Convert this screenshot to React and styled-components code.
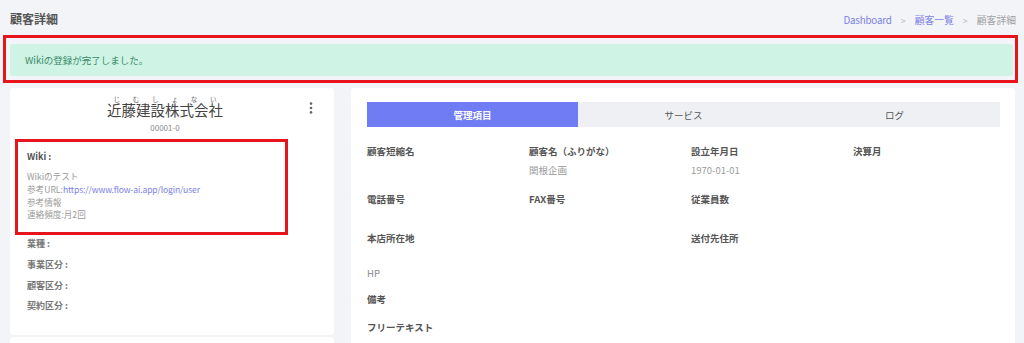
import React from "react";
import styled, { createGlobalStyle } from "styled-components";

const Global = createGlobalStyle`
  html, body { margin: 0; padding: 0; overflow: hidden; background: #f3f4f8; }
  body { font-family: "Noto Sans CJK JP", "Noto Sans", sans-serif; color: #555; }
  * { box-sizing: border-box; }
`;

const Page = styled.div`
  width: 1024px;
  height: 343px;
  overflow: hidden;
`;

const Header = styled.header`
  display: flex;
  align-items: center;
  justify-content: space-between;
  height: 36px;
  padding: 0 8px 0 10px;
`;

const Title = styled.h1`
  margin: 0;
  font-size: 12px;
  font-weight: 700;
  color: #555;
`;

const Crumbs = styled.nav`
  display: flex;
  align-items: center;
  gap: 9px;
  font-size: 9.8px;
  margin-top: 4px;
`;

const Crumb = styled.span`
  color: ${(p) => (p.$current ? "#a0a0a0" : "#7b80e6")};
  letter-spacing: ${(p) => (p.$latin ? "-0.2px" : "0")};
`;

const Sep = styled.span`
  color: #b8b8b8;
  font-size: 9px;
`;

const Highlight = styled.div`
  border: 3px solid #e8141b;
  margin: -1px 6px 0 3px;
  padding: 6px 2px 4px 4px;
`;

const Alert = styled.div`
  display: flex;
  align-items: center;
  height: 32px;
  padding: 0 15px;
  background: #cff3e5;
  border-radius: 3px;
  color: #388b68;
  font-size: 9.5px;
`;

const Main = styled.div`
  display: flex;
  gap: 17px;
  padding: 5px 9px 0 10px;
`;

const LeftCol = styled.div`
  width: 324px;
  flex: none;
  display: flex;
  flex-direction: column;
  gap: 2px;
`;

const Card = styled.section`
  background: #fff;
  border-radius: 3px;
`;

const ProfileCard = styled(Card)`
  height: 247px;
  padding: 8px 15px 0 17px;
`;

const StubCard = styled(Card)`
  height: 40px;
`;

const NameRow = styled.div`
  display: flex;
  align-items: flex-start;
`;

const NameBlock = styled.div`
  flex: 1;
  text-align: center;
`;

const CompanyName = styled.ruby`
  font-size: 14.5px;
  color: #444;
  line-height: 1.2;
  rt {
    font-size: 6.5px;
    color: #666;
  }
`;

const Code = styled.div`
  font-size: 8px;
  color: #8a8a8a;
  margin-top: 1px;
`;

const Kebab = styled.button`
  flex: none;
  width: 16px;
  height: 16px;
  margin-top: 4px;
  padding: 0;
  border: 0;
  background: none;
  display: flex;
  align-items: center;
  justify-content: center;
  color: #666;
`;

const WikiBox = styled.div`
  border: 3px solid #e8141b;
  margin: 6px 0 0 -12px;
  width: 273px;
  height: 96px;
  padding: 8px 9px 0 9px;
`;

const WikiTitle = styled.div`
  font-size: 9px;
  font-weight: 700;
  color: #555;
  line-height: 14px;
  margin-bottom: 6px;
`;

const WikiLine = styled.div`
  font-size: 8.6px;
  line-height: 12.8px;
  color: #9a9a9a;
`;

const Link = styled.a`
  color: #7b80e6;
  text-decoration: none;
  letter-spacing: -0.15px;
`;

const InfoList = styled.div`
  display: flex;
  flex-direction: column;
  gap: 6.8px;
  margin-top: 2px;
`;

const InfoLabel = styled.div`
  font-size: 9px;
  font-weight: 600;
  color: #777;
  line-height: 14px;
`;

const DetailCard = styled(Card)`
  flex: 1;
  height: 270px;
  padding: 14px 15px 0 16px;
`;

const Tabs = styled.div`
  display: grid;
  grid-template-columns: repeat(3, 1fr);
  height: 25px;
  background: #eef0f4;
`;

const Tab = styled.div`
  display: flex;
  align-items: center;
  justify-content: center;
  font-size: 9.5px;
  font-weight: ${(p) => (p.$active ? 700 : 400)};
  color: ${(p) => (p.$active ? "#fff" : "#555")};
  background: ${(p) => (p.$active ? "#6f7cf3" : "transparent")};
`;

const FieldGrid = styled.div`
  margin-top: 16px;
  display: grid;
  grid-template-columns: 162px 162px 162px 1fr;
  grid-template-rows: 48px 39px 35px 26px 28px 20px;
`;

const Field = styled.div`
  grid-column: span ${(p) => p.$span || 1};
`;

const Label = styled.div`
  font-size: 9.5px;
  font-weight: ${(p) => (p.$light ? 400 : 700)};
  color: ${(p) => (p.$light ? "#888" : "#555")};
  line-height: 16px;
`;

const Value = styled.div`
  font-size: 9.5px;
  color: #9a9a9a;
  line-height: 16px;
  margin-top: 3px;
`;

function KebabIcon() {
  return (
    <svg width="4" height="12" viewBox="0 0 4 12" fill="currentColor">
      <circle cx="2" cy="1.6" r="1.3" />
      <circle cx="2" cy="6" r="1.3" />
      <circle cx="2" cy="10.4" r="1.3" />
    </svg>
  );
}

export default function App() {
  return (
    <Page>
      <Global />
      <Header>
        <Title>顧客詳細</Title>
        <Crumbs>
          <Crumb $latin>Dashboard</Crumb>
          <Sep>&gt;</Sep>
          <Crumb>顧客一覧</Crumb>
          <Sep>&gt;</Sep>
          <Crumb $current>顧客詳細</Crumb>
        </Crumbs>
      </Header>

      <Highlight>
        <Alert>Wikiの登録が完了しました。</Alert>
      </Highlight>

      <Main>
        <LeftCol>
          <ProfileCard>
            <NameRow>
              <NameBlock>
                <CompanyName>
                  近藤建設株式会社<rt>じむしょない</rt>
                </CompanyName>
                <Code>00001-0</Code>
              </NameBlock>
              <Kebab aria-label="menu">
                <KebabIcon />
              </Kebab>
            </NameRow>

            <WikiBox>
              <WikiTitle>Wiki :</WikiTitle>
              <WikiLine>Wikiのテスト</WikiLine>
              <WikiLine>
                参考URL:<Link href="#">https://www.flow-ai.app/login/user</Link>
              </WikiLine>
              <WikiLine>参考情報</WikiLine>
              <WikiLine>連絡頻度:月2回</WikiLine>
            </WikiBox>

            <InfoList>
              <InfoLabel>業種 :</InfoLabel>
              <InfoLabel>事業区分 :</InfoLabel>
              <InfoLabel>顧客区分 :</InfoLabel>
              <InfoLabel>契約区分 :</InfoLabel>
            </InfoList>
          </ProfileCard>
          <StubCard />
        </LeftCol>

        <DetailCard>
          <Tabs>
            <Tab $active>管理項目</Tab>
            <Tab>サービス</Tab>
            <Tab>ログ</Tab>
          </Tabs>
          <FieldGrid>
            <Field>
              <Label>顧客短縮名</Label>
            </Field>
            <Field>
              <Label>顧客名（ふりがな）</Label>
              <Value>関根企画</Value>
            </Field>
            <Field>
              <Label>設立年月日</Label>
              <Value>1970-01-01</Value>
            </Field>
            <Field>
              <Label>決算月</Label>
            </Field>

            <Field>
              <Label>電話番号</Label>
            </Field>
            <Field>
              <Label>FAX番号</Label>
            </Field>
            <Field $span={2}>
              <Label>従業員数</Label>
            </Field>

            <Field $span={2}>
              <Label>本店所在地</Label>
            </Field>
            <Field $span={2}>
              <Label>送付先住所</Label>
            </Field>

            <Field $span={4}>
              <Label $light>HP</Label>
            </Field>
            <Field $span={4}>
              <Label>備考</Label>
            </Field>
            <Field $span={4}>
              <Label>フリーテキスト</Label>
            </Field>
          </FieldGrid>
        </DetailCard>
      </Main>
    </Page>
  );
}
